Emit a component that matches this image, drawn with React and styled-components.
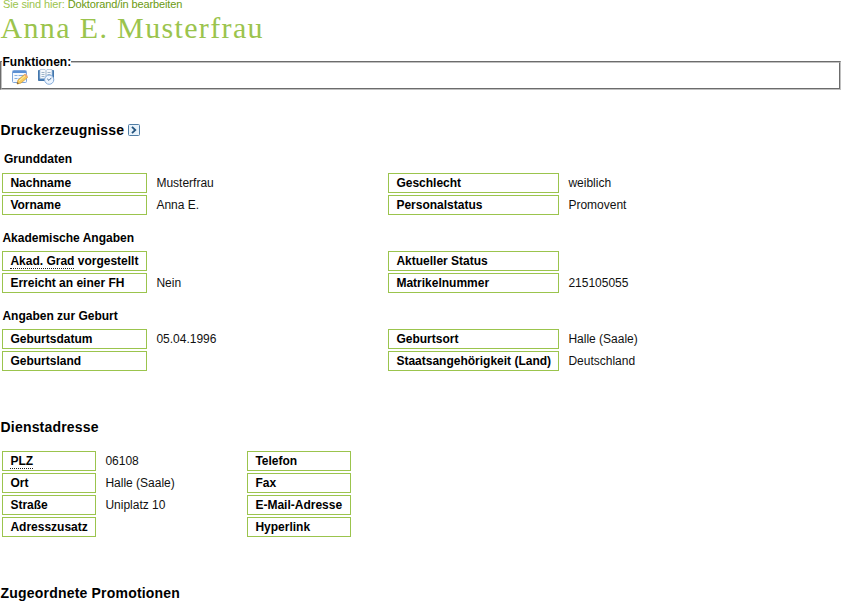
import React from "react";
import styled, { createGlobalStyle } from "styled-components";

const GlobalStyle = createGlobalStyle`
  * { box-sizing: border-box; }
  html, body { margin: 0; background: #fff; overflow: hidden; }
  body { font: 12px/14px "Liberation Sans", Arial, sans-serif; color: #000; }
`;

const Page = styled.main`
  display: flex;
  flex-direction: column;
  width: 841px;
  height: 601px;
  overflow: hidden;
  white-space: nowrap;

  > * { flex-shrink: 0; }
`;
const Breadcrumb = styled.nav`
  height: 9px;
  padding-left: 3px;
  font-size: 11px;
  line-height: 8px;
  letter-spacing: -0.13px;
  color: #9bc44d;
`;
const Crumb = styled.a`
  color: #6b9a10;
`;
const Title = styled.h1`
  margin: 1px 0 0;
  height: 36px;
  padding-left: 0.5px;
  font: 400 30px/36px "Liberation Serif", "Times New Roman", serif;
  letter-spacing: 1.35px;
  color: #9bc44d;
`;
const Functions = styled.fieldset`
  margin: 9px 0 0;
  padding: 0 0 0 10px;
  height: 35px;
  min-width: 0;
  border: 2px groove #c0c0c0;
`;
const Legend = styled.legend`
  margin-left: -10px;
  padding: 0 0 0 0.5px;
  height: 14px;
  font-weight: bold;
`;
const Tools = styled.div`
  display: flex;
  gap: 9px;
`;
const Heading = styled.h2`
  display: flex;
  align-items: center;
  gap: 4px;
  height: 18px;
  margin: ${(p) => p.$top}px 0 0;
  padding-left: 0.5px;
  font-size: 14px;
  line-height: 18px;
  letter-spacing: 0.2px;
`;
const GroupTitle = styled.h3`
  height: 14px;
  margin: ${(p) => p.$top}px 0 ${(p) => p.$bottom}px;
  padding-left: ${(p) => p.$indent || 2.4}px;
  font-size: 12px;
  line-height: 14px;
`;
const Fields = styled.dl`
  display: grid;
  grid-template-columns: ${(p) => p.$columns};
  grid-auto-rows: 20px;
  row-gap: 2px;
  margin: ${(p) => p.$top || 0}px 0 0 2px;
`;
const Label = styled.dt`
  border: 1px solid #9bc44d;
  padding-left: 7.4px;
  font-weight: bold;
  line-height: 18px;
`;
const Value = styled.dd`
  margin: 0;
  padding-left: 9.4px;
  line-height: 20px;
  color: #111;
`;
const Abbr = styled.abbr`
  text-decoration: none;
  border-bottom: 1px dotted #222;
`;

const EditIcon = () => (
  <svg width="17" height="16" viewBox="0 0 17 16">
    <rect x=".5" y="1.5" width="14" height="12" rx="1" fill="#f3f8ff" stroke="#7ea5da" />
    <path d="M1 2h13v2H1z" fill="#5a8fd4" />
    <path d="M2.5 6.5h3m1 0h6M2.5 9.5h3m1 0h3" stroke="#86aee0" />
    <path d="M5 15l1-4 6.5-5.5 3 3L9 14z" fill="#f8cc5c" stroke="#d39c3c" strokeWidth=".8" />
    <path d="M7 12l6-5.2" stroke="#fff0a8" />
    <path d="M12 5.7l1.3-1.2 2.8 2.8-1.3 1.2z" fill="#eda878" />
    <path d="M5 15l.5-2 1.5 1.5z" fill="#6a5a45" />
  </svg>
);
const HistoryIcon = () => (
  <svg width="17" height="16" viewBox="0 0 17 16">
    <path d="M.5 1.5h15v10H.5z" fill="#4a80bb" stroke="#4476ab" />
    <path d="M2 .5h5l1 1 1-1h5v9H9l-1 1-1-1H2z" fill="#f5f8fc" stroke="#a5bed8" strokeWidth=".7" />
    <path d="M8 2v8M3.5 3.5h3m-3 2h3m-3 2h3m3-4h3m-3 2h3" stroke="#9db3c9" />
    <circle cx="11.2" cy="10.7" r="4.6" fill="#edf5ff" stroke="#86addb" />
    <path d="M13.4 8.8l-2.4 2.6-1.8-1.6" fill="none" stroke="#4a6f99" />
  </svg>
);
const OpenIcon = () => (
  <svg width="12" height="12" viewBox="0 0 12 12">
    <rect x=".5" y=".5" width="11" height="11" rx="1" fill="#e8f2fa" stroke="#4f7da5" />
    <path d="M4 2.8l3.3 3.2L4 9.2" fill="none" stroke="#24547e" strokeWidth="1.8" />
  </svg>
);

const WIDE = "145px 241px 171px 1fr";
const NARROW = "94px 151px 104px 1fr";

const FieldGrid = ({ columns, top, rows }) => (
  <Fields $columns={columns} $top={top}>
    {rows.flatMap(([a, av, b, bv], i) => [
      <Label key={`a${i}`}>{a}</Label>,
      <Value key={`av${i}`}>{av}</Value>,
      <Label key={`b${i}`}>{b}</Label>,
      <Value key={`bv${i}`}>{bv}</Value>,
    ])}
  </Fields>
);

export default function App() {
  return (
    <>
      <GlobalStyle />
      <Page>
        <Breadcrumb>Sie sind hier: <Crumb>Doktorand/in bearbeiten</Crumb></Breadcrumb>
        <Title>Anna E. Musterfrau</Title>
        <Functions>
          <Legend>Funktionen:</Legend>
          <Tools><EditIcon /><HistoryIcon /></Tools>
        </Functions>
        <Heading $top={31}>Druckerzeugnisse <OpenIcon /></Heading>
        <GroupTitle $top={13} $bottom={7} $indent={4}>Grunddaten</GroupTitle>
        <FieldGrid columns={WIDE} rows={[
          ["Nachname", "Musterfrau", "Geschlecht", "weiblich"],
          ["Vorname", "Anna E.", "Personalstatus", "Promovent"],
        ]} />
        <GroupTitle $top={16} $bottom={6}>Akademische Angaben</GroupTitle>
        <FieldGrid columns={WIDE} rows={[
          [<><Abbr>Akad. Grad</Abbr> vorgestellt</>, "", "Aktueller Status", ""],
          ["Erreicht an einer FH", "Nein", "Matrikelnummer", "215105055"],
        ]} />
        <GroupTitle $top={16} $bottom={6}>Angaben zur Geburt</GroupTitle>
        <FieldGrid columns={WIDE} rows={[
          ["Geburtsdatum", "05.04.1996", "Geburtsort", "Halle (Saale)"],
          ["Geburtsland", "", "Staatsangehörigkeit (Land)", "Deutschland"],
        ]} />
        <Heading $top={47}>Dienstadresse</Heading>
        <FieldGrid columns={NARROW} top={15} rows={[
          [<Abbr>PLZ</Abbr>, "06108", "Telefon", ""],
          ["Ort", "Halle (Saale)", "Fax", ""],
          ["Straße", "Uniplatz 10", "E-Mail-Adresse", ""],
          ["Adresszusatz", "", "Hyperlink", ""],
        ]} />
        <Heading $top={47}>Zugeordnete Promotionen</Heading>
      </Page>
    </>
  );
}
